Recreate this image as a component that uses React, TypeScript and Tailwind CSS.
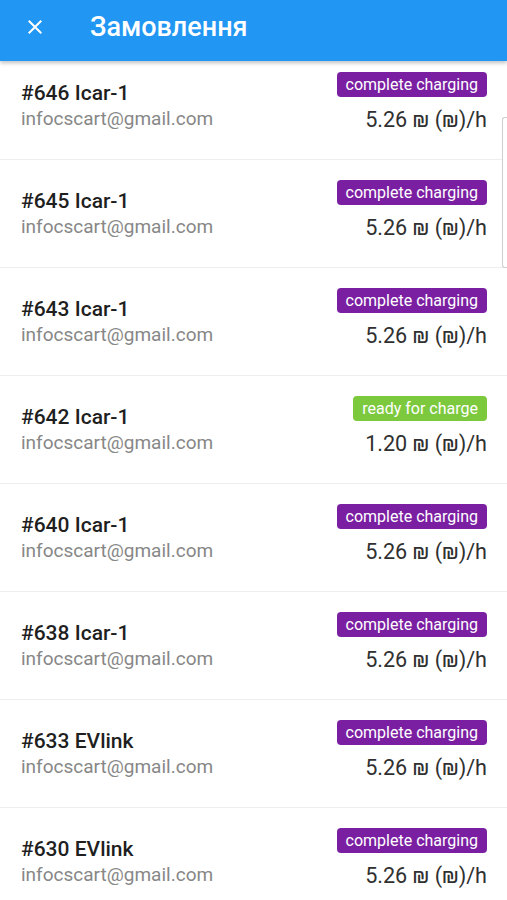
import * as React from "react";

interface Order {
  id: number;
  name: string;
  email: string;
  status: "complete" | "ready";
  price: string;
}

const orders: Order[] = [
  { id: 646, name: "Icar-1", email: "infocscart@gmail.com", status: "complete", price: "5.26" },
  { id: 645, name: "Icar-1", email: "infocscart@gmail.com", status: "complete", price: "5.26" },
  { id: 643, name: "Icar-1", email: "infocscart@gmail.com", status: "complete", price: "5.26" },
  { id: 642, name: "Icar-1", email: "infocscart@gmail.com", status: "ready", price: "1.20" },
  { id: 640, name: "Icar-1", email: "infocscart@gmail.com", status: "complete", price: "5.26" },
  { id: 638, name: "Icar-1", email: "infocscart@gmail.com", status: "complete", price: "5.26" },
  { id: 633, name: "EVlink", email: "infocscart@gmail.com", status: "complete", price: "5.26" },
  { id: 630, name: "EVlink", email: "infocscart@gmail.com", status: "complete", price: "5.26" },
];

function StatusBadge({ status }: { status: Order["status"] }) {
  if (status === "ready") {
    return (
      <span className="inline-flex h-[25px] items-center rounded-[4px] bg-[#7cc93e] px-[9px] text-[16px] leading-none text-white">
        ready for charge
      </span>
    );
  }
  return (
    <span className="inline-flex h-[25px] items-center rounded-[4px] bg-[#7b1fa2] px-[9px] text-[16px] leading-none text-white">
      complete charging
    </span>
  );
}

function OrderRow({ order }: { order: Order }) {
  return (
    <div className="flex h-[108px] items-start justify-between border-b border-[#eeeeee] pl-[21px] pr-[20px]">
      <div className="flex flex-col pt-[29px]">
        <span className="text-[21px] font-medium leading-[24px] text-[#1f1f1f]">
          #{order.id} {order.name}
        </span>
        <span className="mt-[2px] text-[19px] leading-[24px] text-[#878787]">{order.email}</span>
      </div>
      <div className="flex flex-col items-end pt-[20px]">
        <StatusBadge status={order.status} />
        <span className="mt-[11px] text-[21.6px] leading-[24px] text-[#303030]">
          {order.price} ₪ (₪)/h
        </span>
      </div>
    </div>
  );
}

export default function App() {
  return (
    <div
      className="relative h-[900px] w-[507px] overflow-hidden bg-white"
      style={{ fontFamily: "Roboto, 'Noto Sans', sans-serif" }}
    >
      <header className="relative z-10 flex h-[61px] items-center bg-[#2196f3] pb-[7px] shadow-[0_2px_4px_rgba(0,0,0,0.25)]">
        <button className="ml-[23px] flex h-[24px] w-[24px] items-center justify-center text-white">
          <svg width="24" height="24" viewBox="0 0 24 24" fill="currentColor">
            <path d="M19 6.41 17.59 5 12 10.59 6.41 5 5 6.41 10.59 12 5 17.59 6.41 19 12 13.41 17.59 19 19 17.59 13.41 12z" />
          </svg>
        </button>
        <h1 className="ml-[43px] text-[27px] font-medium leading-[30px] text-white">Замовлення</h1>
      </header>
      <div className="-mt-[9px]">
        {orders.map((o) => (
          <OrderRow key={o.id} order={o} />
        ))}
      </div>
      <div className="absolute right-0 top-[117px] h-[151px] w-[5px] rounded-l-[3px] border border-r-0 border-[#cfcfcf] bg-white" />
    </div>
  );
}
